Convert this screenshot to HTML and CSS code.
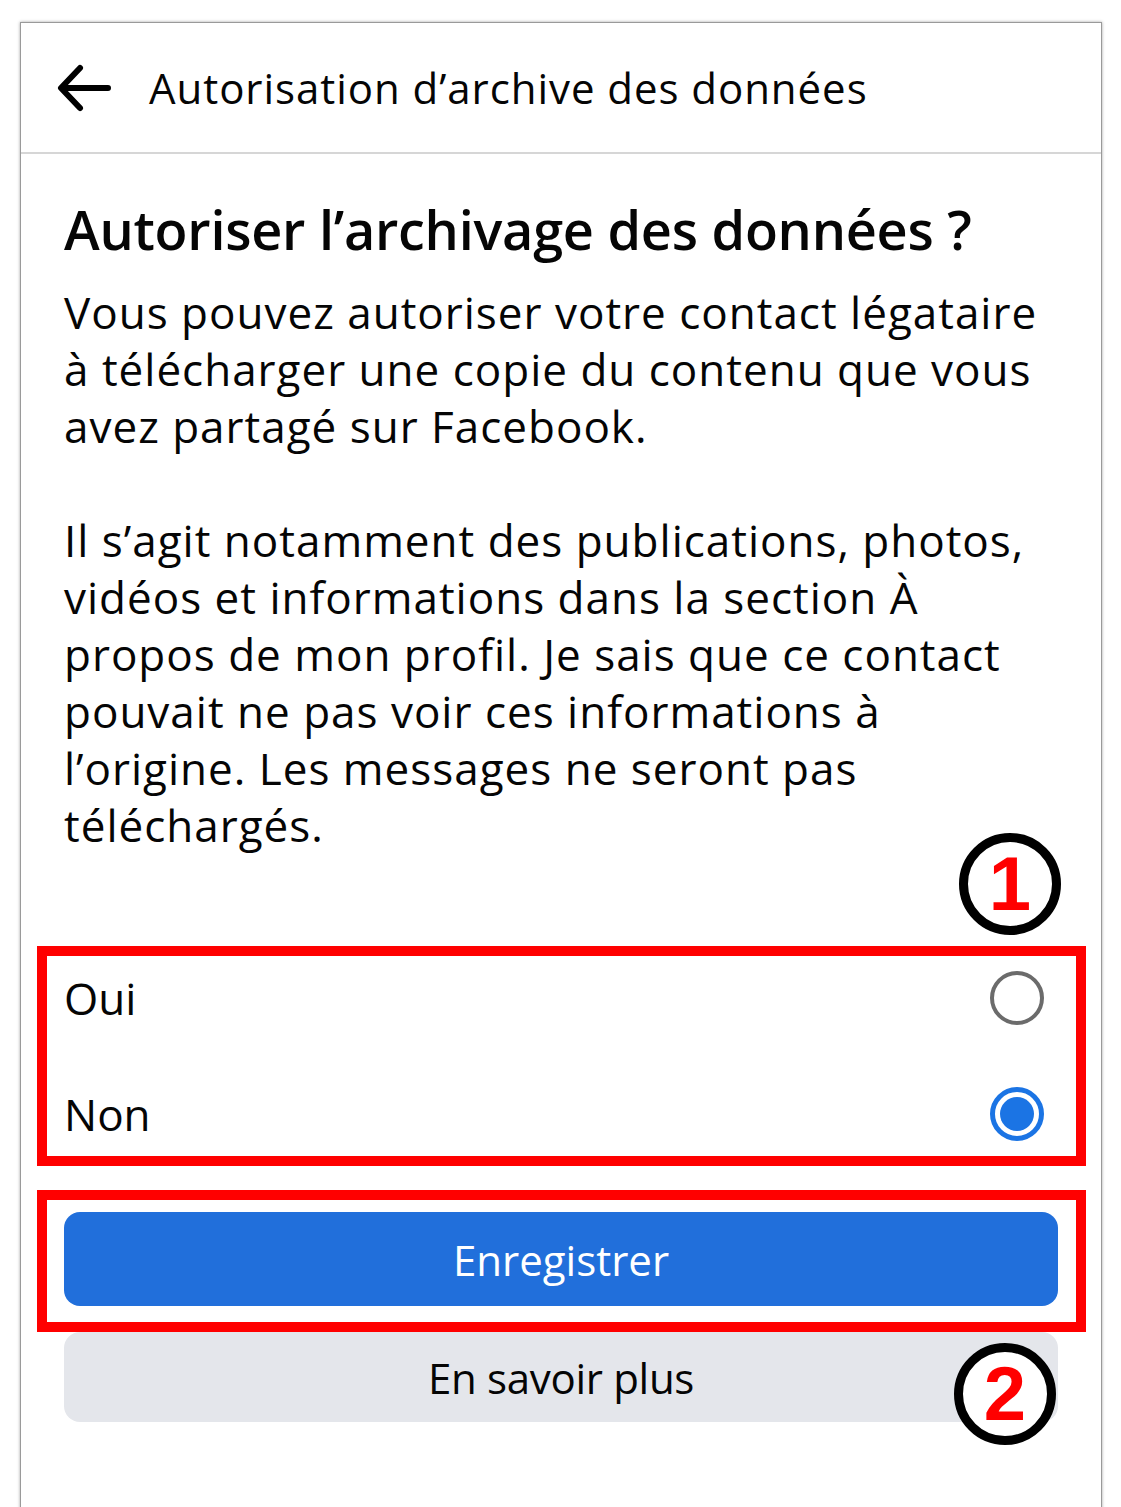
FILE: index.html
```html
<!DOCTYPE html>
<html lang="fr">
<head>
    <meta charset="UTF-8">
    <meta name="viewport" content="width=device-width, initial-scale=1.0">
    <title>Autorisation d'archive des données</title>
    <link rel="stylesheet" href="styles.css">
</head>
<body>
    <div class="phone">
        <header class="topbar">
            <svg class="back" width="56" height="50" viewBox="0 0 56 50">
                <path d="M52 25H6M24 5L5 25L24 45" fill="none" stroke="#000" stroke-width="6" stroke-linecap="round" stroke-linejoin="round"/>
            </svg>
            <span class="title">Autorisation d’archive des données</span>
        </header>

        <section class="content">
            <h1>Autoriser l’archivage des données ?</h1>
            <p>Vous pouvez autoriser votre contact légataire à télécharger une copie du contenu que vous avez partagé sur Facebook.</p>
            <p>Il s’agit notamment des publications, photos, vidéos et informations dans la section À propos de mon profil. Je sais que ce contact pouvait ne pas voir ces informations à l’origine. Les messages ne seront pas téléchargés.</p>

            <div class="options">
                <div class="option">
                    <span>Oui</span>
                    <span class="radio"></span>
                </div>
                <div class="option">
                    <span>Non</span>
                    <span class="radio checked"></span>
                </div>
            </div>

            <div class="actions">
                <button class="btn primary">Enregistrer</button>
                <button class="btn secondary">En savoir plus</button>
            </div>
        </section>

        <div class="mark box-one"></div>
        <div class="mark box-two"></div>
        <div class="num num-one">1</div>
        <div class="num num-two">2</div>
    </div>
</body>
</html>
```

FILE: styles.css
```css
body {
    margin: 0;
    background-color: #ffffff;
    font-family: "Open Sans", "Noto Sans", sans-serif;
    color: #050505;
}
.phone {
    position: relative;
    margin: 22px 0 0 20px;
    width: 1080px;
    height: 1500px;
    border: 1px solid #9a9a9a;
    border-bottom: none;
    box-shadow: 0 0 3px rgba(0, 0, 0, 0.35);
    background-color: #ffffff;
}
.topbar {
    display: flex;
    align-items: center;
    height: 129px;
    padding-left: 35px;
    border-bottom: 2px solid #d6d6d6;
}
.back {
    margin-right: 37px;
}
.title {
    font-size: 42px;
    letter-spacing: 0.95px;
}
.content {
    padding: 0 43px 0 43px;
}
h1 {
    margin: 38px 0 18px 0;
    font-size: 54px;
    font-weight: 600;
    letter-spacing: -0.25px;
}
p {
    margin: 0 0 57px 0;
    font-size: 44px;
    line-height: 57px;
    letter-spacing: 1px;
}
.options {
    margin-top: 86px;
}
.option {
    display: flex;
    align-items: center;
    justify-content: space-between;
    height: 116px;
    font-size: 44px;
    padding-right: 14px;
}
.radio {
    box-sizing: border-box;
    width: 54px;
    height: 54px;
    border: 4px solid #6b6b6b;
    border-radius: 50%;
}
.radio.checked {
    border-color: #1b74e4;
    border-width: 5px;
    padding: 5px;
    background-color: #1b74e4;
    background-clip: content-box;
}
.actions {
    display: flex;
    flex-direction: column;
    gap: 26px;
    margin-top: 40px;
}
.btn {
    height: 94px;
    border: none;
    border-radius: 16px;
    font-family: "Open Sans", "Noto Sans", sans-serif;
    font-size: 42px;
}
.primary {
    background-color: #216fdb;
    color: #ffffff;
}
.secondary {
    height: 90px;
    background-color: #e4e6eb;
    color: #050505;
    letter-spacing: -0.3px;
}
.mark {
    position: absolute;
    left: 16px;
    width: 1029px;
    border: 10px solid #ff0000;
}
.box-one {
    top: 923px;
    height: 200px;
}
.box-two {
    top: 1167px;
    height: 122px;
}
.num {
    position: absolute;
    box-sizing: border-box;
    width: 102px;
    height: 102px;
    border: 9px solid #000;
    border-radius: 50%;
    background-color: #ffffff;
    color: #ff0000;
    font-family: "Liberation Sans", Arial, sans-serif;
    font-size: 76px;
    font-weight: 700;
    line-height: 84px;
    text-align: center;
}
.num-one {
    left: 938px;
    top: 810px;
}
.num-two {
    left: 933px;
    top: 1320px;
}
```
